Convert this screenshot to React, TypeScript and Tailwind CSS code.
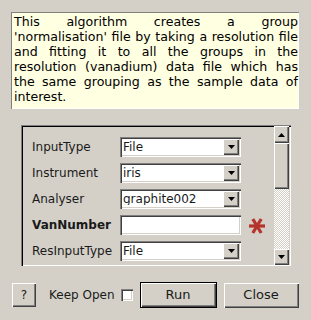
import React from 'react';

const sunken =
  'shadow-[inset_1px_1px_0_#808080,inset_2px_2px_0_#404040,inset_-1px_-1px_0_#ffffff,inset_-2px_-2px_0_#d4d0c8]';
const raised =
  'shadow-[inset_1px_1px_0_#ffffff,inset_-1px_-1px_0_#404040,inset_-2px_-2px_0_#808080]';

const DownArrow = () => (
  <svg width="7" height="4" viewBox="0 0 7 4">
    <path d="M0 0h7L3.5 4z" fill="#000" />
  </svg>
);

const UpArrow = () => (
  <svg width="7" height="4" viewBox="0 0 7 4">
    <path d="M0 4h7L3.5 0z" fill="#000" />
  </svg>
);

const Combo = ({ value }: { value: string }) => (
  <div className={`flex h-[20px] w-[121px] items-center bg-white pl-[3px] pr-[2px] ${sunken}`}>
    <span className="flex-1 truncate leading-none">{value}</span>
    <div className={`flex h-[16px] w-[16px] items-center justify-center bg-[#d4d0c8] ${raised}`}>
      <DownArrow />
    </div>
  </div>
);

const Star = () => (
  <svg width="18" height="16" viewBox="0 0 18 16">
    <g stroke="#b5332a" strokeWidth="3.2" strokeLinecap="butt">
      <line x1="1" y1="8" x2="17" y2="8" />
      <line x1="4.8" y1="1" x2="13.2" y2="15" />
      <line x1="13.2" y1="1" x2="4.8" y2="15" />
    </g>
  </svg>
);

const rows: { label: string; value?: string; bold?: boolean }[] = [
  { label: 'InputType', value: 'File' },
  { label: 'Instrument', value: 'iris' },
  { label: 'Analyser', value: 'graphite002' },
  { label: 'VanNumber', bold: true },
  { label: 'ResInputType', value: 'File' },
];

export default function App() {
  return (
    <div className="flex h-[320px] w-[311px] flex-col bg-[#d4d0c8] font-['DejaVu_Sans',sans-serif] text-[12px] text-[#1a1a1a]">
      {/* description */}
      <div className="ml-[11px] mt-[12px] h-[97px] w-[288px] border-l border-t border-[#808080] bg-[#ffffe1] pl-[2px] pr-[1px] pt-[1px] shadow-[inset_-1px_-1px_0_#ffffff]">
        <p className="text-justify text-[12.6px] leading-[15px] text-black">
          This algorithm creates a group 'normalisation' file by taking a resolution file and fitting it to
          all the groups in the resolution (vanadium) data file which has the same grouping as the sample
          data of interest.
        </p>
      </div>

      {/* properties frame */}
      <div className="ml-[21px] mt-[16px] flex h-[141px] w-[270px] overflow-hidden shadow-[inset_1px_1px_0_#808080,inset_2px_2px_0_#000000,inset_-1px_-1px_0_#ffffff]">
        <div className="flex flex-1 flex-col gap-[6px] pl-[11px] pt-[12px]">
          {rows.map((r) => (
            <div key={r.label} className="flex h-[20px] shrink-0 items-center">
              <span className={`w-[88px] ${r.bold ? 'font-bold' : ''}`}>{r.label}</span>
              {r.value !== undefined ? (
                <Combo value={r.value} />
              ) : (
                <>
                  <div className={`h-[20px] w-[121px] bg-white ${sunken}`} />
                  <div className="ml-[7px] mt-[2px]">
                    <Star />
                  </div>
                </>
              )}
            </div>
          ))}
        </div>
        <div className="mr-[2px] mt-[1px] mb-[1px] flex w-[15px] flex-col">
          <div className={`flex h-[17px] items-center justify-center bg-[#d4d0c8] ${raised}`}>
            <UpArrow />
          </div>
          <div className={`h-[46px] bg-[#d4d0c8] ${raised}`} />
          <div className="flex-1 bg-[repeating-conic-gradient(#ffffff_0_25%,#d4d0c8_0_50%)] bg-[length:2px_2px]" />
          <div className={`flex h-[16px] items-center justify-center bg-[#d4d0c8] ${raised}`}>
            <DownArrow />
          </div>
        </div>
      </div>

      {/* buttons */}
      <div className="mt-[16px] flex items-center pl-[12px]">
        <button className={`flex h-[24px] w-[24px] items-center justify-center bg-[#d4d0c8] ${raised}`}>?</button>
        <span className="ml-[13px]">Keep Open</span>
        <div className={`ml-[6px] h-[12px] w-[12px] bg-white ${sunken}`} />
        <button className={`ml-[7px] flex h-[26px] w-[77px] items-center justify-center border border-black bg-[#d4d0c8] text-[13px] ${raised}`}>
          Run
        </button>
        <button className={`ml-[7px] flex h-[25px] w-[75px] items-center justify-center bg-[#d4d0c8] text-[13px] ${raised}`}>
          Close
        </button>
      </div>
    </div>
  );
}
